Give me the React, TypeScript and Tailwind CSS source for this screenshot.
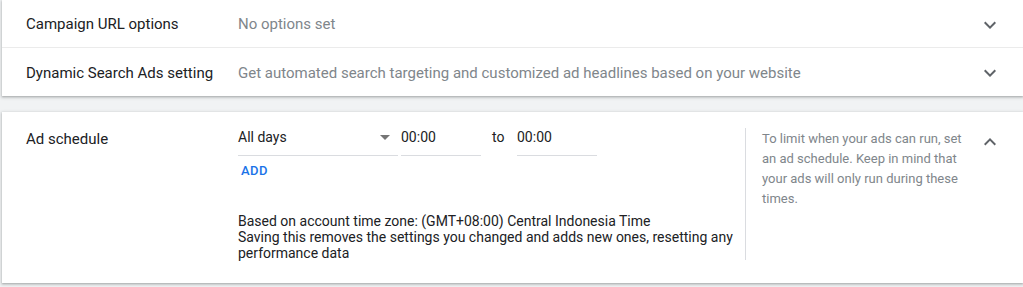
import React from "react";

const Chevron = ({ up = false }: { up?: boolean }) => (
  <svg width="24" height="24" viewBox="0 0 24 24" className="text-[#5f6368]">
    {up ? (
      <path d="M7.41 15.41 12 10.83l4.59 4.58L18 14l-6-6-6 6z" fill="currentColor" />
    ) : (
      <path d="M7.41 8.59 12 13.17l4.59-4.58L18 10l-6 6-6-6z" fill="currentColor" />
    )}
  </svg>
);

export default function App() {
  return (
    <div
      className="w-[1023px] h-[287px] bg-[#f1f3f4] pl-[2px] overflow-hidden text-[14px] text-[#202124]"
      style={{ fontFamily: "Roboto, 'Liberation Sans', sans-serif" }}
    >
      <div className="bg-white shadow-[0_1px_2px_0_rgba(60,64,67,0.3),0_1px_3px_1px_rgba(60,64,67,0.15)]">
        <div className="flex items-center h-[48px] pt-[2px] border-b border-[#ebebeb] text-[15px]">
          <div className="w-[236px] pl-[24px]">Campaign URL options</div>
          <div className="flex-1 text-[#80868b]">No options set</div>
          <div className="w-[24px] mr-[21px] flex"><Chevron /></div>
        </div>
        <div className="flex items-center h-[48px] pt-[2px] text-[15px]">
          <div className="w-[236px] pl-[24px]">Dynamic Search Ads setting</div>
          <div className="flex-1 text-[#80868b]">
            Get automated search targeting and customized ad headlines based on your website
          </div>
          <div className="w-[24px] mr-[21px] flex"><Chevron /></div>
        </div>
      </div>

      <div className="mt-[16px] bg-white h-[171px] shadow-[0_1px_2px_0_rgba(60,64,67,0.3),0_1px_3px_1px_rgba(60,64,67,0.15)] flex">
        <div className="w-[236px] pl-[24px] pt-[16px] text-[15px]">Ad schedule</div>
        <div className="w-[507px] pt-[15px] flex flex-col">
          <div className="flex items-start">
            <div className="w-[160px] h-[29px] border-b border-[#dadce0] flex items-start justify-between pr-[8px]">
              <span className="leading-[20px]">All days</span>
              <svg width="10" height="5" viewBox="0 0 10 5" className="mt-[8px]">
                <path d="M0 0h10L5 5z" fill="#757575" />
              </svg>
            </div>
            <div className="ml-[3px] w-[80px] h-[29px] border-b border-[#dadce0] leading-[20px]">00:00</div>
            <div className="ml-[11px] w-[25px] leading-[20px]">to</div>
            <div className="w-[80px] h-[29px] border-b border-[#dadce0] leading-[20px]">00:00</div>
          </div>
          <div className="mt-[7px] pl-[3px] text-[13px] font-medium text-[#1a73e8] tracking-[0.4px] leading-[16px]">ADD</div>
          <div className="mt-[34px] text-[14px] leading-[16px] pr-[8px]">
            Based on account time zone: (GMT+08:00) Central Indonesia Time
            <br />
            Saving this removes the settings you changed and adds new ones, resetting any performance data
          </div>
        </div>
        <div className="mt-[16px] mb-[23px] w-px bg-[#dadce0]" />
        <div className="w-[224px] pl-[16px] pt-[17px] text-[13px] leading-[20px] text-[#80868b]">
          To limit when your ads can run, set an ad schedule. Keep in mind that your ads will only run during these times.
        </div>
        <div className="pt-[18px] pl-[8px]"><Chevron up /></div>
      </div>
    </div>
  );
}
